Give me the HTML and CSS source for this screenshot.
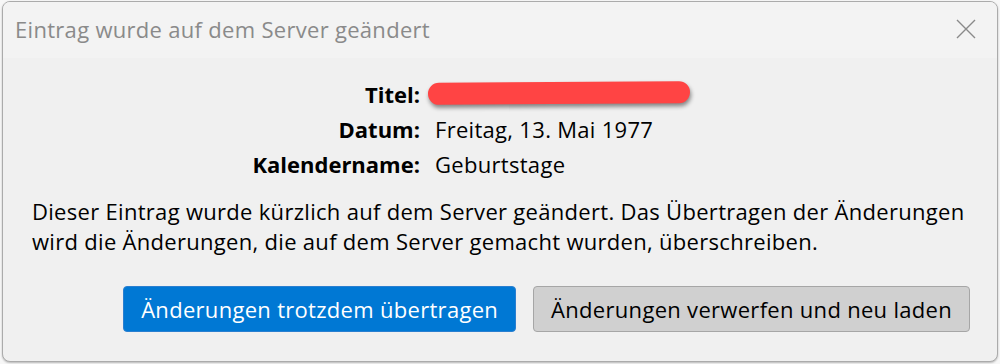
FILE: index.html
```html
<!DOCTYPE html>
<html lang="de">
<head>
    <meta charset="UTF-8">
    <title>Eintrag wurde auf dem Server geändert</title>
    <link rel="stylesheet" href="styles.css">
</head>
<body>
    <div class="window">
        <div class="titlebar">
            <span class="title">Eintrag wurde auf dem Server geändert</span>
            <svg class="close" width="20" height="20" viewBox="0 0 20 20" xmlns="http://www.w3.org/2000/svg">
                <path d="M1,1 L19,19 M19,1 L1,19" stroke="#8a8a8a" stroke-width="1.4" fill="none"></path>
            </svg>
        </div>
        <div class="content">
            <div class="details">
                <div class="label">Titel:</div>
                <div class="value"><span class="redacted"></span></div>
                <div class="label">Datum:</div>
                <div class="value">Freitag, 13. Mai 1977</div>
                <div class="label">Kalendername:</div>
                <div class="value">Geburtstage</div>
            </div>
            <p class="message">
                Dieser Eintrag wurde kürzlich auf dem Server geändert. Das Übertragen der Änderungen<br>
                wird die Änderungen, die auf dem Server gemacht wurden, überschreiben.
            </p>
            <div class="buttons">
                <button class="btn btn-primary">Änderungen trotzdem übertragen</button>
                <button class="btn">Änderungen verwerfen und neu laden</button>
            </div>
        </div>
    </div>
</body>
</html>
```

FILE: styles.css
```css
html, body {
    height: 100%;
}

body {
    margin: 0;
    padding: 1px 2px 0 2px;
    box-sizing: border-box;
    background-color: #f7f7f7;
    font-family: 'Open Sans', sans-serif;
    color: #000;
    font-size: 22px;
    letter-spacing: 0.3px;
}

.window {
    width: 996px;
    height: 361px;
    box-sizing: border-box;
    border: 1px solid #ababab;
    border-radius: 8px;
    background-color: #f0f0f0;
    overflow: hidden;
    box-shadow: 0 1px 2px rgba(0, 0, 0, 0.25);
}

.titlebar {
    height: 56px;
    display: flex;
    align-items: center;
    justify-content: space-between;
    padding: 0 21px 0 12px;
    background-color: #f3f3f3;
}

    .titlebar .title {
        color: #8a8a8a;
        font-size: 22px;
        padding-bottom: 3px;
    }

    .titlebar .close {
        margin-bottom: 2px;
    }

.content {
    padding: 18px 27px 0 29px;
}

.details {
    display: grid;
    grid-template-columns: 388px auto;
    column-gap: 15px;
    grid-auto-rows: 35px;
    align-items: center;
}

    .details .label {
        text-align: right;
        font-weight: 700;
        letter-spacing: 0;
    }

    .details .value {
        display: flex;
        align-items: center;
    }

.redacted {
    display: block;
    width: 262px;
    height: 22px;
    margin-left: -7px;
    margin-top: -1px;
    border-radius: 11px;
    background-color: #ff4444;
    box-shadow: 1px 3px 4px rgba(0, 0, 0, 0.45);
    transform: rotate(-0.4deg);
}

.message {
    margin: 15px 0 0;
    line-height: 30px;
}

.buttons {
    display: flex;
    justify-content: flex-end;
    gap: 17px;
    margin-top: 30px;
}

.btn {
    height: 46px;
    padding: 0 17px;
    font-family: inherit;
    font-size: 22px;
    letter-spacing: 0.3px;
    color: #000;
    background-color: #d0d0d0;
    border: 1px solid #a6a6a6;
    border-radius: 4px;
}

.btn-primary {
    background-color: #0078d4;
    border-color: #2a7fd0;
    color: #fff;
}
```
